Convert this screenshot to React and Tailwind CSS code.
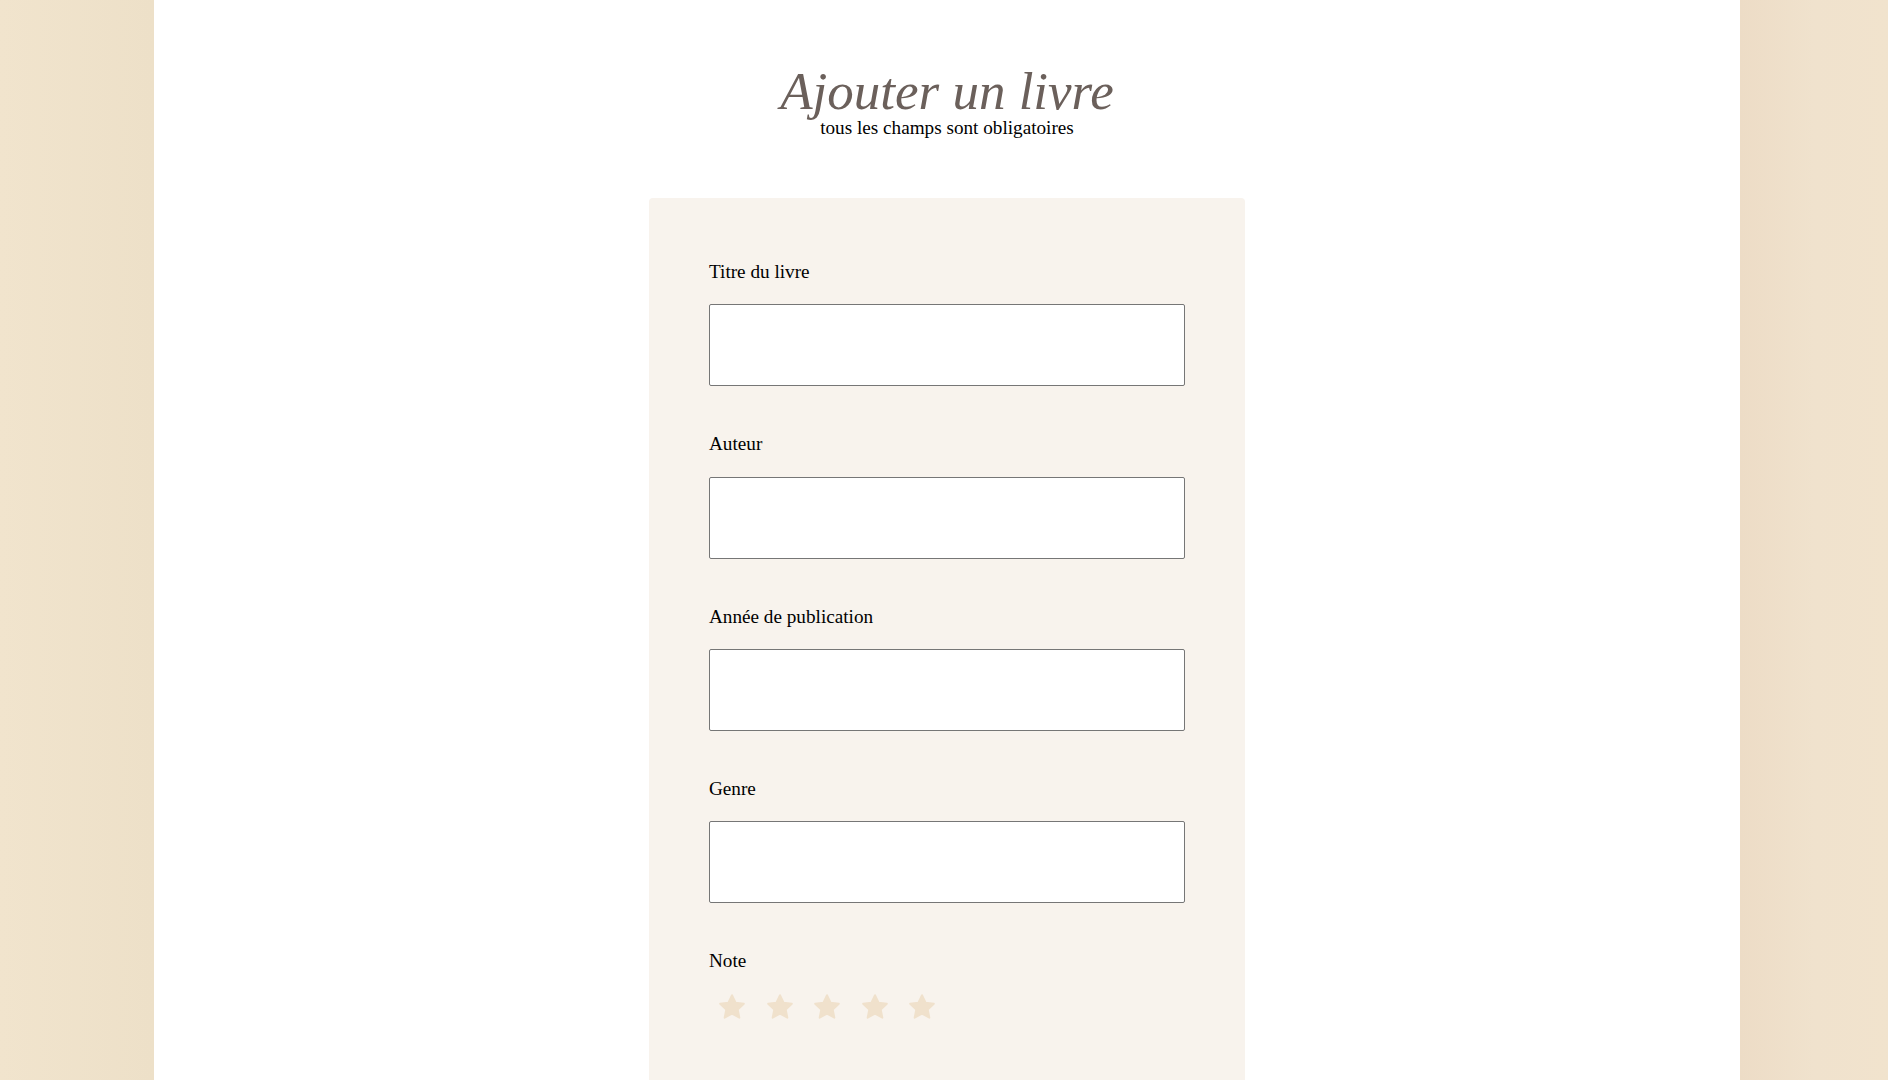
const FIELDS = ['Titre du livre', 'Auteur', 'Année de publication', 'Genre']

function Star() {
  return (
    <svg width="30" height="30" viewBox="0 0 24 24" className="blur-[0.6px]">
      <path
        d="M12 2.5l2.9 6.1 6.6.8-4.9 4.6 1.3 6.6L12 17.3l-5.9 3.3 1.3-6.6-4.9-4.6 6.6-.8z"
        fill="#f0e1cc"
        stroke="#f0e1cc"
        strokeWidth="1.5"
        strokeLinejoin="round"
      />
    </svg>
  )
}

export default function App() {
  return (
    <div className="flex min-h-screen w-full font-['Liberation_Serif','Times_New_Roman',serif] text-black">
      <div className="w-[154px] shrink-0 bg-gradient-to-r from-[#f1e4cd] to-[#ede0c8]" />
      <main className="flex-1 bg-white flex flex-col items-center pt-[65px]">
        <h1 className="text-[53px] leading-none italic text-[#6b605b]">Ajouter un livre</h1>
        <p className="text-[19.2px] leading-none">tous les champs sont obligatoires</p>

        <form className="mt-[61px] w-[596px] bg-[#f8f3ed] rounded-t-sm px-[60px] pt-[64px] pb-[120px]">
          {FIELDS.map((label) => (
            <div key={label} className="mb-[48px]">
              <label className="block text-[19.2px] leading-none">{label}</label>
              <input
                type="text"
                className="mt-[23px] block w-full h-[82px] bg-white border border-[#767676] rounded-[2px] px-3 text-[18px]"
              />
            </div>
          ))}
          <div>
            <label className="block text-[19.2px] leading-none">Note</label>
            <div className="mt-[22px] ml-2 flex gap-[17.5px]">
              {[1, 2, 3, 4, 5].map((n) => (
                <Star key={n} />
              ))}
            </div>
          </div>
        </form>
      </main>
      <div className="w-[148px] shrink-0 bg-gradient-to-r from-[#eddcc6] via-[#f0e2cd] to-[#f1e3cd]" />
    </div>
  )
}
